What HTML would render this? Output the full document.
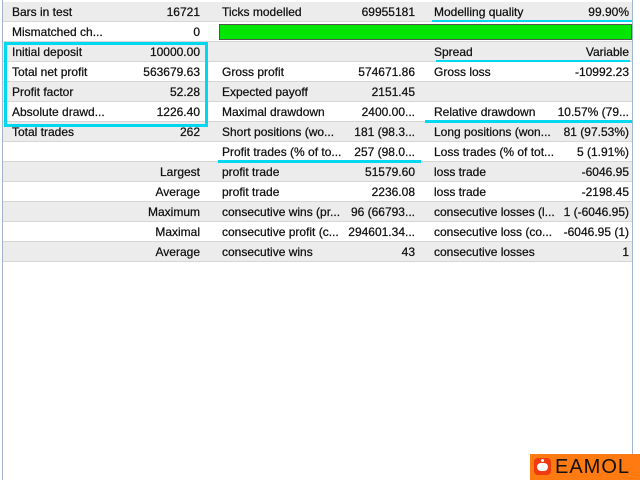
<!DOCTYPE html><html><head><style>
body{margin:0;width:640px;height:480px;background:#fff;position:relative;overflow:hidden;font-family:"Liberation Sans",sans-serif;font-size:12px;color:#111;-webkit-text-stroke:0.25px #111}
.r{position:absolute;left:3px;width:629px;height:19px;border-bottom:1px solid #d6d6d6}
.g{background:#ececec}.w{background:#fff}
.t{position:absolute;top:3px;white-space:nowrap}
.hl{position:absolute;background:#00d8f0}
</style></head><body>
<div style="position:absolute;left:2px;top:0;width:1px;height:480px;background:#9fb6d0"></div>
<div style="position:absolute;left:632px;top:0;width:1px;height:480px;background:#9fb6d0"></div>

<div class="r g" style="top:2px"><span class="t" style="left:9px">Bars in test</span><span class="t" style="right:432px">16721</span><span class="t" style="left:219px">Ticks modelled</span><span class="t" style="right:217px">69955181</span><span class="t" style="left:431px">Modelling quality</span><span class="t" style="right:3px">99.90%</span></div>
<div class="r w" style="top:22px"><span class="t" style="left:9px">Mismatched ch...</span><span class="t" style="right:432px">0</span><div style="position:absolute;left:216px;top:2px;width:411px;height:14px;background:#00e600;border:1px solid #555"></div></div>
<div class="r g" style="top:42px"><span class="t" style="left:9px">Initial deposit</span><span class="t" style="right:432px">10000.00</span><span class="t" style="left:431px">Spread</span><span class="t" style="right:3px">Variable</span></div>
<div class="r w" style="top:62px"><span class="t" style="left:9px">Total net profit</span><span class="t" style="right:432px">563679.63</span><span class="t" style="left:219px">Gross profit</span><span class="t" style="right:217px">574671.86</span><span class="t" style="left:431px">Gross loss</span><span class="t" style="right:3px">-10992.23</span></div>
<div class="r g" style="top:82px"><span class="t" style="left:9px">Profit factor</span><span class="t" style="right:432px">52.28</span><span class="t" style="left:219px">Expected payoff</span><span class="t" style="right:217px">2151.45</span></div>
<div class="r w" style="top:102px"><span class="t" style="left:9px">Absolute drawd...</span><span class="t" style="right:432px">1226.40</span><span class="t" style="left:219px">Maximal drawdown</span><span class="t" style="right:217px">2400.00...</span><span class="t" style="left:431px">Relative drawdown</span><span class="t" style="right:3px">10.57% (79...</span></div>
<div class="r g" style="top:122px"><span class="t" style="left:9px">Total trades</span><span class="t" style="right:432px">262</span><span class="t" style="left:219px">Short positions (wo...</span><span class="t" style="right:217px">181 (98.3...</span><span class="t" style="left:431px">Long positions (won...</span><span class="t" style="right:3px">81 (97.53%)</span></div>
<div class="r w" style="top:142px"><span class="t" style="left:219px">Profit trades (% of to...</span><span class="t" style="right:217px">257 (98.0...</span><span class="t" style="left:431px">Loss trades (% of tot...</span><span class="t" style="right:3px">5 (1.91%)</span></div>
<div class="r g" style="top:162px"><span class="t" style="right:432px">Largest</span><span class="t" style="left:219px">profit trade</span><span class="t" style="right:217px">51579.60</span><span class="t" style="left:431px">loss trade</span><span class="t" style="right:3px">-6046.95</span></div>
<div class="r w" style="top:182px"><span class="t" style="right:432px">Average</span><span class="t" style="left:219px">profit trade</span><span class="t" style="right:217px">2236.08</span><span class="t" style="left:431px">loss trade</span><span class="t" style="right:3px">-2198.45</span></div>
<div class="r g" style="top:202px"><span class="t" style="right:432px">Maximum</span><span class="t" style="left:219px">consecutive wins (pr...</span><span class="t" style="right:217px">96 (66793...</span><span class="t" style="left:431px">consecutive losses (l...</span><span class="t" style="right:3px">1 (-6046.95)</span></div>
<div class="r w" style="top:222px"><span class="t" style="right:432px">Maximal</span><span class="t" style="left:219px">consecutive profit (c...</span><span class="t" style="right:217px">294601.34...</span><span class="t" style="left:431px">consecutive loss (co...</span><span class="t" style="right:3px">-6046.95 (1)</span></div>
<div class="r g" style="top:242px"><span class="t" style="right:432px">Average</span><span class="t" style="left:219px">consecutive wins</span><span class="t" style="right:217px">43</span><span class="t" style="left:431px">consecutive losses</span><span class="t" style="right:3px">1</span></div>

<div style="position:absolute;left:4px;top:42px;width:198px;height:79px;border:3px solid #00d8f0"></div>
<div class="hl" style="left:432px;top:20px;width:200px;height:2px"></div>
<div class="hl" style="left:436px;top:60px;width:194px;height:2px"></div>
<div class="hl" style="left:425px;top:120px;width:207px;height:3px"></div>
<div class="hl" style="left:218px;top:160px;width:203px;height:3px"></div>

<div style="position:absolute;left:530px;top:454px;width:110px;height:26px;background:#ff7a10"></div>
<div style="position:absolute;left:534px;top:458px;width:17px;height:17px;background:#f03a10;border-radius:4px"></div>
<div style="position:absolute;left:537px;top:463px;width:11px;height:8px;background:#fff;border-radius:4px"></div>
<div style="position:absolute;left:541px;top:459px;width:3px;height:3px;background:#fff;border-radius:2px"></div>
<div style="position:absolute;left:555px;top:454px;font-size:20px;line-height:26px;color:#111;-webkit-text-stroke:0;letter-spacing:1px">EAMOL</div>
</body></html>
